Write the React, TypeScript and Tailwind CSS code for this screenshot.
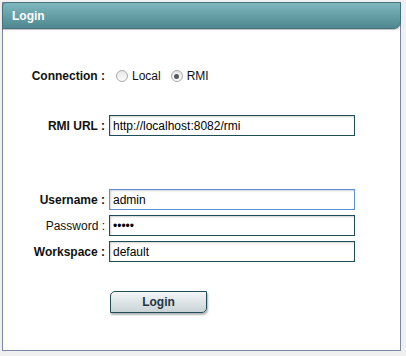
import React from "react";

function Radio({ checked }: { checked?: boolean }) {
  return (
    <span className="flex h-[12px] w-[12px] items-center justify-center rounded-full border border-[#a8a8a8] bg-gradient-to-b from-[#e8e8e8] to-[#fbfbfb]">
      {checked && <span className="h-[5px] w-[5px] rounded-full bg-[#5a5a5a]" />}
    </span>
  );
}

function Field({
  label,
  value,
  bold = true,
  focused = false,
  type = "text",
}: {
  label: string;
  value: string;
  bold?: boolean;
  focused?: boolean;
  type?: string;
}) {
  return (
    <div className="flex h-[21px] items-center">
      <label
        className={`w-[106px] pr-[4px] text-right text-[12px] text-[#111] ${
          bold ? "font-bold" : "font-normal"
        }`}
      >
        {label}
      </label>
      <input
        readOnly
        type={type}
        defaultValue={value}
        className={`h-[21px] w-[246px] border bg-white px-[3px] text-[12px] text-black outline-none shadow-[inset_1px_1px_2px_rgba(0,0,0,0.18)] ${
          focused ? "border-[#5b8fd6]" : "border-[#1f4d57]"
        }`}
        style={{ fontFamily: "'Liberation Sans', Arial, sans-serif" }}
      />
    </div>
  );
}

export default function App() {
  return (
    <div
      className="h-[356px] w-[406px] bg-[#f0f0f0] pl-[2px] pt-[2px]"
      style={{ fontFamily: "'Liberation Sans', Arial, sans-serif" }}
    >
      <div className="flex h-[349px] w-[399px] flex-col border border-[#7b87a1] bg-white">
        <div className="-mx-px -mt-px flex h-[27px] items-center rounded-tl-[4px] rounded-br-[7px] border border-[#47707a] bg-gradient-to-b from-[#7eb8be] to-[#4f8890] pl-[9px] shadow-[0_1px_1px_rgba(0,0,0,0.25)]">
          <span className="text-[12px] font-bold text-white">Login</span>
        </div>

        <div className="mt-[39px] flex h-[16px] items-center">
          <span className="w-[106px] pr-[4px] text-right text-[12px] font-bold text-[#111]">
            Connection :
          </span>
          <div className="ml-[7px] flex items-center gap-[4px]">
            <Radio />
            <span className="text-[12px] text-[#111]">Local</span>
          </div>
          <div className="ml-[10px] flex items-center gap-[4px]">
            <Radio checked />
            <span className="text-[12px] text-[#111]">RMI</span>
          </div>
        </div>

        <div className="mt-[31px]">
          <Field label="RMI URL :" value="http://localhost:8082/rmi" />
        </div>

        <div className="mt-[53px] flex flex-col gap-[5px]">
          <Field label="Username :" value="admin" focused />
          <Field label="Password :" value="admin" bold={false} type="password" />
          <Field label="Workspace :" value="default" />
        </div>

        <div className="mt-[27px] pl-[107px]">
          <button className="h-[22px] w-[97px] rounded-tl-[5px] rounded-br-[5px] border border-[#1f4d57] bg-gradient-to-b from-[#f4f6f7] to-[#c9d3d6] text-[12px] font-bold text-[#1d3646] shadow-[1px_2px_2px_rgba(0,0,0,0.3)]">
            Login
          </button>
        </div>
      </div>
    </div>
  );
}
